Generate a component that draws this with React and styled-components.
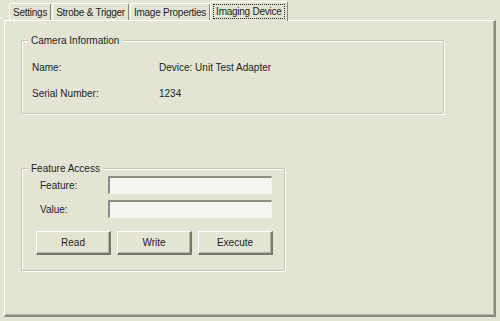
import styled, { createGlobalStyle } from "styled-components";

const GlobalStyle = createGlobalStyle`
  html, body {
    margin: 0;
    padding: 0;
    background: #e4e4d5;
  }
  body {
    font-family: "Liberation Sans", Tahoma, Arial, sans-serif;
    font-size: 10px;
    color: #1e1e1e;
  }
`;

const Window = styled.div`
  width: 500px;
  height: 321px;
  box-sizing: border-box;
  padding: 1px 4px 4px 4px;
  display: flex;
  flex-direction: column;
  background: #e4e4d5;
`;

const TabStrip = styled.div`
  display: flex;
  align-items: flex-end;
  padding-left: 4px;
  height: 19px;
  position: relative;
  z-index: 1;
`;

const Tab = styled.div`
  box-sizing: border-box;
  height: ${(p) => (p.$active ? "20px" : "17px")};
  margin-bottom: ${(p) => (p.$active ? "-1px" : "0")};
  padding: 0 ${(p) => (p.$active ? "3px" : "2px")};
  display: flex;
  align-items: center;
  border-top: 1px solid #ffffff;
  border-left: 1px solid #ffffff;
  border-right: 1px solid #8a8a7c;
  border-top-left-radius: 2px;
  border-top-right-radius: 2px;
  background: #e4e4d5;
  margin-left: ${(p) => (p.$active ? "0" : "1px")};
  white-space: nowrap;
  letter-spacing: -0.25px;
`;

const FocusLabel = styled.span`
  outline: ${(p) => (p.$focused ? "1px dotted #222" : "none")};
  padding: 0 ${(p) => (p.$focused ? "2px" : "1px")};
  line-height: 13px;
`;

const Panel = styled.div`
  flex: 1;
  box-sizing: border-box;
  border-top: 1px solid #ffffff;
  border-left: 1px solid #ffffff;
  border-right: 2px solid #8a8a7c;
  border-bottom: 2px solid #8a8a7c;
  box-shadow: inset -1px -1px 0 #b8b8a8;
  padding: 19px 0 0 16px;
  display: flex;
  flex-direction: column;
  align-items: flex-start;
`;

const GroupBox = styled.div`
  position: relative;
  box-sizing: border-box;
  width: ${(p) => p.$width}px;
  height: ${(p) => p.$height}px;
  border: 1px solid #c6c6b5;
  box-shadow: 1px 1px 0 #ffffff, inset 1px 1px 0 #ffffff;
  border-radius: 2px;
  margin-bottom: ${(p) => p.$gap || 0}px;
`;

const Legend = styled.span`
  position: absolute;
  top: -7px;
  left: 6px;
  padding: 0 3px;
  background: #e4e4d5;
  line-height: 14px;
`;

const InfoGrid = styled.div`
  display: grid;
  grid-template-columns: 127px 1fr;
  row-gap: 13px;
  padding: 20px 0 0 10px;
  line-height: 13px;
`;

const FeatureBody = styled.div`
  display: flex;
  flex-direction: column;
  padding: 7px 0 0 18px;
`;

const FieldRow = styled.div`
  display: flex;
  align-items: center;
  height: 18px;
  margin-bottom: 6px;
`;

const FieldLabel = styled.label`
  width: 68px;
`;

const Input = styled.input`
  box-sizing: border-box;
  width: 164px;
  height: 18px;
  margin: 0;
  border-top: 2px solid #8e8e80;
  border-left: 2px solid #8e8e80;
  border-right: 1px solid #f4f4ee;
  border-bottom: 1px solid #f4f4ee;
  background: #f5f5f1;
  font: inherit;
  padding: 0 3px;
  outline: none;
`;

const ButtonRow = styled.div`
  display: flex;
  gap: 6px;
  margin-top: 7px;
  margin-left: -4px;
`;

const Button = styled.button`
  box-sizing: border-box;
  width: 75px;
  height: 24px;
  margin: 0;
  padding: 0;
  background: #e4e4d5;
  font: inherit;
  color: #1e1e1e;
  border-top: 1px solid #ffffff;
  border-left: 1px solid #ffffff;
  border-right: 2px solid #77776a;
  border-bottom: 2px solid #77776a;
  box-shadow: inset -1px -1px 0 #b4b4a4;
`;

export default function App() {
  const tabs = ["Settings", "Strobe & Trigger", "Image Properties", "Imaging Device"];
  return (
    <>
      <GlobalStyle />
      <Window>
        <TabStrip>
          {tabs.map((t, i) => {
            const active = i === tabs.length - 1;
            return (
              <Tab key={t} $active={active}>
                <FocusLabel $focused={active}>{t}</FocusLabel>
              </Tab>
            );
          })}
        </TabStrip>
        <Panel>
          <GroupBox $width={423} $height={74} $gap={54}>
            <Legend>Camera Information</Legend>
            <InfoGrid>
              <span>Name:</span>
              <span>Device: Unit Test Adapter</span>
              <span>Serial Number:</span>
              <span>1234</span>
            </InfoGrid>
          </GroupBox>
          <GroupBox $width={264} $height={103}>
            <Legend>Feature Access</Legend>
            <FeatureBody>
              <FieldRow>
                <FieldLabel>Feature:</FieldLabel>
                <Input />
              </FieldRow>
              <FieldRow>
                <FieldLabel>Value:</FieldLabel>
                <Input />
              </FieldRow>
              <ButtonRow>
                <Button>Read</Button>
                <Button>Write</Button>
                <Button>Execute</Button>
              </ButtonRow>
            </FeatureBody>
          </GroupBox>
        </Panel>
      </Window>
    </>
  );
}
